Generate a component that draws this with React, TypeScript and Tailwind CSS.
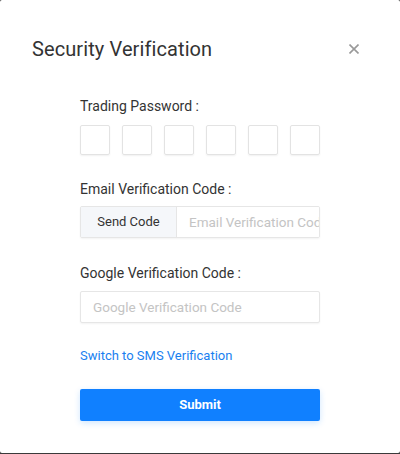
export default function App() {
  return (
    <div className="w-[400px] h-[454px] bg-[#3a3a3a] font-['Roboto',sans-serif]">
      <div className="w-[400px] h-[453px] bg-white rounded-[2px] flex flex-col">
        {/* header */}
        <div className="flex items-center justify-between pl-8 pr-[41px] pt-[37px]">
          <h2 className="text-[20px] leading-[24px] text-[#333] tracking-[0.1px]">Security Verification</h2>
          <button className="w-[10px] h-[10px] flex items-center justify-center text-[#999]">
            <svg width="10" height="10" viewBox="0 0 10 10" fill="none" stroke="currentColor" strokeWidth="1.6">
              <path d="M0.5 0.5L9.5 9.5M9.5 0.5L0.5 9.5" />
            </svg>
          </button>
        </div>

        <div className="flex flex-col w-[240px] mx-auto pt-[36px]">
          <label className="text-[14px] leading-[18px] text-[#333]">Trading Password :</label>
          <div className="flex gap-3 mt-[10px]">
            {[0, 1, 2, 3, 4, 5].map((i) => (
              <div
                key={i}
                className="w-[30px] h-[30px] border border-[#e3e3e3] rounded-[2px] shadow-[0_1px_2px_rgba(0,0,0,0.06)]"
              />
            ))}
          </div>

          <label className="text-[14px] leading-[18px] text-[#333] mt-[25px]">Email Verification Code :</label>
          <div className="flex h-[32px] mt-[8px] border border-[#e6e6e6] rounded-[2px] shadow-[0_1px_2px_rgba(0,0,0,0.05)] overflow-hidden">
            <button className="w-[96px] shrink-0 bg-[#f5f7fa] border-r border-[#e6e6e6] text-[13px] text-[#333]">
              Send Code
            </button>
            <input
              className="flex-1 min-w-0 pl-[12px] text-[13.5px] text-[#333] placeholder:text-[#c4c4c4] outline-none bg-white"
              placeholder="Email Verification Code"
            />
          </div>

          <label className="text-[14px] leading-[18px] text-[#333] mt-[26px]">Google Verification Code :</label>
          <input
            className="h-[32px] mt-[9px] border border-[#e6e6e6] rounded-[2px] shadow-[0_1px_2px_rgba(0,0,0,0.05)] pl-[12px] text-[13.5px] text-[#333] placeholder:text-[#c4c4c4] outline-none"
            placeholder="Google Verification Code"
          />

          <a className="text-[13px] leading-[18px] text-[#1a7ff0] mt-[24px]">Switch to SMS Verification</a>

          <button className="h-[32px] mt-[24px] bg-[#1080ff] rounded-[2px] text-white text-[13px] font-bold shadow-[0_2px_6px_rgba(16,128,255,0.2)]">
            Submit
          </button>
        </div>
      </div>
    </div>
  )
}
